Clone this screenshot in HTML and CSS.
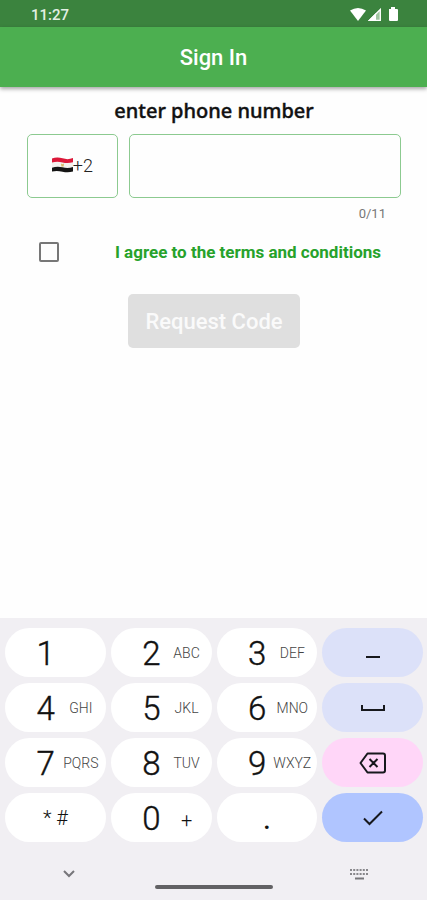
FILE: index.html
```html
<!DOCTYPE html>
<html lang="en">
<head>
<meta charset="utf-8">
<meta name="viewport" content="width=device-width, initial-scale=1">
<title>Sign In</title>
<link rel="stylesheet" href="styles.css">
</head>
<body>
<div class="status">
  <time>11:27</time>
  <svg width="48" height="16" viewBox="0 0 48 16" aria-hidden="true">
    <path d="M0 3.500Q8 -1.500 16 3.500L8 14Z" fill="#fff"/>
    <path d="M18 14L31 1V14Z" fill="#9fc5a0"/>
    <path d="M18 14L26 6V14Z" fill="#fff"/>
    <path d="M19.500 13.300L30.300 2.500V13.300Z" fill="none" stroke="#fff" stroke-width="1.300"/>
    <path d="M39 2h2V0h4v2h2q1 0 1 1v10q0 1-1 1h-7q-1 0-1-1V3z" fill="#fff"/>
  </svg>
</div>
<header class="appbar"><h1>Sign In</h1></header>
<main>
  <form class="form">
    <label class="heading" for="phone">enter phone number</label>
    <div class="fields">
      <button type="button" class="country" aria-label="Country code +2">
        <svg width="21" height="16" viewBox="0 0 21 16" aria-hidden="true">
          <path d="M0 1.500Q5 -.5 10.500 1.300T21 1V14.500Q16 16 10.500 14.700T0 14.500Z" fill="#f3f1ee"/>
          <path d="M0 1.500Q5 -.5 10.500 1.300T21 1V5.200Q16 6.500 10.500 5.400T0 5.500Z" fill="#dc1839"/>
          <path d="M0 10.700Q5 9 10.500 10.300T21 10V14.500Q16 16 10.500 14.700T0 14.500Z" fill="#151515"/>
          <path d="M9 6.500l1.500.7 1.500-.7-.4 3H9.400z" fill="#d8b866"/>
        </svg><span>+2</span>
      </button>
      <input class="phone" id="phone" type="tel" maxlength="11">
    </div>
    <div class="counter">0/11</div>
    <div class="agree">
      <input type="checkbox" id="agree">
      <label for="agree">I agree to the terms and conditions</label>
    </div>
    <button class="request" type="submit" disabled>Request Code</button>
  </form>
</main>
<section class="keyboard" aria-label="Number keyboard">
  <div class="keys">
    <button type="button" class="key"><b>1</b></button>
    <button type="button" class="key"><b>2</b><small>ABC</small></button>
    <button type="button" class="key"><b>3</b><small>DEF</small></button>
    <button type="button" class="key action" aria-label="Dash"><svg width="28" height="28" viewBox="0 0 28 28"><path d="M7 18h14" stroke-width="2"/></svg></button>
    <button type="button" class="key"><b>4</b><small>GHI</small></button>
    <button type="button" class="key"><b>5</b><small>JKL</small></button>
    <button type="button" class="key"><b>6</b><small>MNO</small></button>
    <button type="button" class="key action" aria-label="Space"><svg width="28" height="28" viewBox="0 0 28 28"><path d="M3 11v5h22v-5" stroke-width="2"/></svg></button>
    <button type="button" class="key"><b>7</b><small>PQRS</small></button>
    <button type="button" class="key"><b>8</b><small>TUV</small></button>
    <button type="button" class="key"><b>9</b><small>WXYZ</small></button>
    <button type="button" class="key action erase" aria-label="Backspace"><svg width="28" height="28" viewBox="0 0 28 28"><path d="M8.500 4.500H24Q26 4.500 26 6.500V21.500Q26 23.500 24 23.500H8.500L1.500 14ZM10.500 10l8 8M18.500 10l-8 8" stroke-width="2" stroke-linejoin="round"/></svg></button>
    <button type="button" class="key symbols">* #</button>
    <button type="button" class="key"><b>0</b><small class="plus">+</small></button>
    <button type="button" class="key point">.</button>
    <button type="button" class="key action enter" aria-label="Done"><svg width="28" height="28" viewBox="0 0 28 28"><path d="M5 14.500l5.500 5.500L23 7.500" stroke-width="2"/></svg></button>
  </div>
  <div class="nav">
    <button type="button" aria-label="Hide keyboard"><svg width="12" height="8" viewBox="0 0 12 8"><path d="M1 1l5 5 5-5" fill="none" stroke="#77767a" stroke-width="2"/></svg></button>
    <span class="handle"></span>
    <button type="button" aria-label="Switch keyboard"><svg width="18" height="12" viewBox="0 0 18 12"><path d="M0 2h18M0 6h18" fill="none" stroke="#88878b" stroke-width="2" stroke-dasharray="2 1.200"/><path d="M5 10.500h9" stroke="#77767a" stroke-width="2"/></svg></button>
  </div>
</section>
</body>
</html>
```
FILE: styles.css
```css
* { box-sizing: border-box; }
body {
  margin: 0;
  min-height: 100vh;
  display: flex;
  flex-direction: column;
  background: #fefefe;
  color: #111;
  font-family: Roboto, "Liberation Sans", sans-serif;
}
button, input { font: inherit; color: inherit; margin: 0; }
button { border: 0; padding: 0; background: none; }
svg { display: block; flex: none; }

.status {
  display: flex;
  align-items: center;
  justify-content: space-between;
  padding: 4px 29px 2px 31px;
  height: 27px;
  background: #3b833e;
  color: #e4f0e4;
  font-size: 15px;
  font-weight: 500;
}
.appbar {
  display: grid;
  place-items: center;
  height: 60px;
  padding-top: 2px;
  background: #4caf50;
  color: #fff;
  box-shadow: 0 2px 4px rgba(0, 0, 0, .35);
}
.appbar h1 { margin: 0; font-size: 22px; font-weight: 500; line-height: 28px; }

main { flex: 1; }
.form { display: flex; flex-direction: column; padding: 10px 26px 0 27px; }
.heading {
  align-self: center;
  font-family: "Noto Sans", Roboto, sans-serif;
  font-size: 20px;
  font-weight: 500;
  line-height: 28px;
  -webkit-text-stroke: 0.4px #111;
}
.fields { display: grid; grid-template-columns: 1fr 3fr; gap: 11px; margin-top: 9px; }
.country, .phone {
  width: 100%;
  height: 64px;
  border: 1px solid #8cca90;
  border-radius: 5px;
  background: none;
  outline: none;
}
.country { display: flex; align-items: center; justify-content: center; padding-bottom: 2px; font-size: 18px; font-weight: 300; color: #222; }
.phone { padding: 0 12px; font-size: 18px; }
.counter { padding: 8px 15px 0 0; text-align: right; font-size: 13px; line-height: 16px; color: #777; }
.agree { display: flex; align-items: center; justify-content: space-between; padding: 0 20px 0 12px; margin-top: 18px; }
.agree input {
  appearance: none;
  width: 20px;
  height: 20px;
  border: 2px solid #777;
  border-radius: 2px;
}
.agree label { color: #27a22b; font-size: 17px; font-weight: 700; line-height: 24px; }
.request {
  align-self: center;
  margin-top: 30px;
  padding: 0 17px;
  height: 54px;
  border-radius: 5px;
  background: #dfdfdf;
  color: #fafafa;
  font-size: 22px;
  font-weight: 500;
}

.keyboard { padding: 10px 4px 0 5px; background: #f1eff3; }
.keys { display: grid; grid-template-columns: repeat(4, 1fr); gap: 6px 5px; }
.key {
  display: grid;
  grid-template-columns: 50fr 6fr 40fr 5fr;
  align-items: center;
  height: 49px;
  border-radius: 25px;
  background: #fff;
}
.key b { font-size: 33px; font-weight: 300; line-height: 47px; padding-top: 2px; text-align: right; -webkit-text-stroke: 0.4px #111; }
.key small { grid-column: 3; justify-self: center; font-size: 14px; font-weight: 300; color: #444; }
.key small.plus { padding-top: 4px; font-size: 20px; font-weight: 300; color: #111; }
.key.symbols, .key.point, .key.action { grid-template-columns: 1fr; justify-items: center; }
.symbols { font-size: 20px; font-weight: 300; }
.point { font-size: 32px; }
.action { background: #dce1f9; }
.action svg { fill: none; stroke: #17181d; }
.erase { background: #ffd6f8; }
.enter { background: #b0c5ff; }
.nav { display: grid; grid-template-columns: 128px 1fr 128px; height: 58px; align-items: center; }
.nav button { display: grid; place-items: center; height: 40px; margin-top: 6px; }
.handle { align-self: end; justify-self: center; width: 118px; height: 4px; margin-bottom: 11px; border-radius: 2px; background: #626164; }
```
